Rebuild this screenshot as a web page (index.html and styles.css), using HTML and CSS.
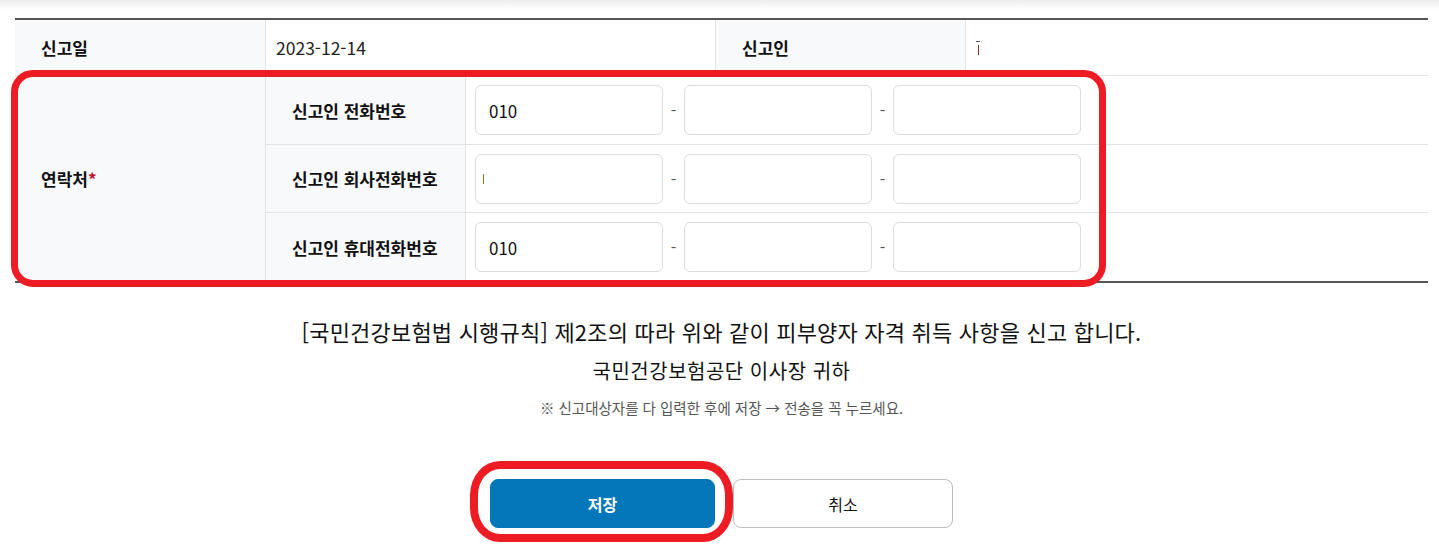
FILE: index.html
```html
<!DOCTYPE html>
<html lang="ko">
<head>
<meta charset="utf-8">
<title>피부양자 자격 취득 신고</title>
<link rel="stylesheet" href="styles.css">
</head>
<body>
<div class="topshade"></div>
<div class="wrap">
  <div class="form">
    <div class="cell label r1 c1">신고일</div>
    <div class="cell value r1 c2">2023-12-14</div>
    <div class="cell label r1 c4">신고인</div>
    <div class="cell value r1 c5"><span class="masked" aria-hidden="true"><i class="m-top"></i><i class="m-stem"></i></span></div>

    <div class="cell label contact">연락처<span class="req">*</span></div>

    <div class="cell label sub r2">신고인 전화번호</div>
    <div class="cell inputs r2">
      <div class="inp">010</div><span class="dash">-</span><div class="inp"></div><span class="dash">-</span><div class="inp"></div>
    </div>

    <div class="cell label sub r3">신고인 회사전화번호</div>
    <div class="cell inputs r3">
      <div class="inp"><span class="caret"></span></div><span class="dash">-</span><div class="inp"></div><span class="dash">-</span><div class="inp"></div>
    </div>

    <div class="cell label sub r4">신고인 휴대전화번호</div>
    <div class="cell inputs r4">
      <div class="inp">010</div><span class="dash">-</span><div class="inp"></div><span class="dash">-</span><div class="inp"></div>
    </div>
  </div>

  <div class="notice">
    <p class="main">[국민건강보험법 시행규칙] 제2조의 따라 위와 같이 피부양자 자격 취득 사항을 신고 합니다.</p>
    <p class="to">국민건강보험공단 이사장 귀하</p>
    <p class="hint">※ 신고대상자를 다 입력한 후에 저장 → 전송을 꼭 누르세요.</p>
  </div>

  <div class="buttons">
    <button class="btn save">저장</button>
    <button class="btn cancel">취소</button>
  </div>
</div>

<div class="mark mark-table"></div>
<div class="mark mark-save"></div>
</body>
</html>
```
FILE: styles.css
```css
* { box-sizing: border-box; }
html, body { margin: 0; padding: 0; background: #fff; }
body {
  font-family: "Noto Sans CJK KR", "Noto Sans", sans-serif;
  color: #111;
  width: 1439px;
  height: 547px;
  overflow: hidden;
  position: relative;
}
.topshade {
  height: 10px;
  background: linear-gradient(#ececec, #ffffff);
}
.wrap {
  padding: 8px 11px 0 15px;
}
.form {
  display: grid;
  grid-template-columns: 250px 199px 249px 249px 1fr;
  grid-template-rows: 55px 68px 67px 68px;
  gap: 1px;
  background: #e3e3e3;
  border-top: 2px solid #555;
  border-bottom: 2px solid #555;
}
.cell {
  background: #fff;
  display: flex;
  align-items: center;
  font-size: 17px;
}
.label {
  background: #f8f9fb;
  font-weight: 700;
  padding-left: 26px;
}
.value { padding-left: 10px; color: #222; font-size: 17.5px; }
.r1 { grid-row: 1; }
.c1 { grid-column: 1; }
.c2 { grid-column: 2 / 4; }
.c4 { grid-column: 4; }
.c5 { grid-column: 5; padding-left: 10px; }
.contact { grid-column: 1; grid-row: 2 / 5; }
.req { color: #c8102e; }
.sub { grid-column: 2; padding-left: 26px; }
.r2 { grid-row: 2; }
.r3 { grid-row: 3; }
.r4 { grid-row: 4; }
.inputs { grid-column: 3 / 6; padding-left: 9px; }
.inp {
  width: 188px;
  height: 50px;
  border: 1px solid #dcdcdc;
  border-radius: 6px;
  display: flex;
  align-items: center;
  padding-left: 13px;
  font-size: 17px;
  color: #111;
  background: #fff;
}
.dash {
  width: 21px;
  text-align: center;
  color: #555;
  font-size: 16px;
}
.masked {
  position: relative;
  display: inline-block;
  width: 5px;
  height: 16px;
}
.masked i {
  position: absolute;
  display: block;
}
.m-top {
  left: 0;
  top: 1px;
  width: 4px;
  height: 1px;
  background: #555;
}
.m-stem {
  left: 2px;
  top: 5px;
  width: 1px;
  height: 10px;
  background: #8a2a18;
}
.caret {
  display: inline-block;
  width: 1px;
  height: 10px;
  background: #b0701a;
  margin-left: -6px;
}
.notice {
  text-align: center;
  padding-top: 30px;
}
.notice p { margin: 0; }
.main {
  font-size: 22px;
  line-height: 36px;
  letter-spacing: 0.2px;
  color: #111;
}
.to {
  margin-top: 7px !important;
  font-size: 20px;
  line-height: 30px;
  letter-spacing: 0.5px;
  color: #111;
}
.hint {
  margin-top: 12px !important;
  font-size: 14.5px;
  line-height: 20px;
  color: #555;
}
.buttons {
  display: flex;
  justify-content: center;
  gap: 18px;
  margin-top: 61px;
}
.btn {
  height: 49px;
  border-radius: 8px;
  font-family: inherit;
  font-size: 16px;
  cursor: pointer;
}
.save {
  width: 225px;
  background: #0477bb;
  border: 1px solid #0477bb;
  color: #fff;
  font-weight: 700;
}
.cancel {
  width: 220px;
  background: #fff;
  border: 1px solid #bdbdbd;
  color: #111;
}
.mark {
  position: absolute;
  border: 7px solid #ed1c24;
  pointer-events: none;
}
.mark-table {
  left: 11px;
  top: 70px;
  width: 1095px;
  height: 217px;
  border-radius: 22px;
}
.mark-save {
  left: 470px;
  top: 461px;
  width: 263px;
  height: 81px;
  border-width: 8px;
  border-radius: 30px / 34px;
}
```
